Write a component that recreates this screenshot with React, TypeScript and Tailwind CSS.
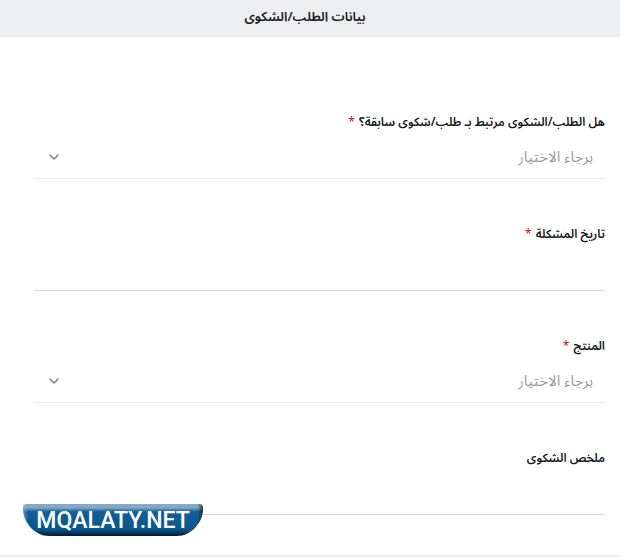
import type { ReactNode } from "react";
import { ChevronDown } from "lucide-react";

type FieldProps = { id: string; label: string; required?: boolean; children: ReactNode };

const controlClass =
  "block h-11 w-full appearance-none rounded-none border-b bg-transparent px-3 pt-0.5 text-[15px] text-[#9a9a9a] outline-none";

function Field({ id, label, required, children }: FieldProps) {
  return (
    <div>
      <label htmlFor={id} className="block h-6 text-xs leading-6 font-semibold text-[#16191c]">
        {label}
        {required && <span className="pr-px font-normal text-[#b02020]"> *</span>}
      </label>
      {children}
    </div>
  );
}

function SelectField({ id, label }: { id: string; label: string }) {
  return (
    <Field id={id} label={label} required>
      <div className="relative">
        <select id={id} className={`${controlClass} border-[#ebebeb]`}>
          <option>برجاء الاختيار</option>
        </select>
        <ChevronDown
          className="pointer-events-none absolute top-3.5 left-3 size-4 text-[#7c7c7c]"
          strokeWidth={2.25}
        />
      </div>
    </Field>
  );
}

function Logo() {
  return (
    <svg
      className="absolute bottom-[21px] left-[23px] h-8 w-45"
      viewBox="0 0 180 32"
      role="img"
      aria-label="MQALATY.NET"
    >
      <defs>
        <linearGradient id="plate" x1="0" y1="0" x2="0" y2="1">
          <stop offset="0" stopColor="#86abc6" />
          <stop offset="0.12" stopColor="#7fa8c6" />
          <stop offset="0.24" stopColor="#145f96" />
          <stop offset="0.8" stopColor="#0b568e" />
          <stop offset="0.92" stopColor="#063254" />
          <stop offset="1" stopColor="#031c31" />
        </linearGradient>
        <linearGradient id="sides" x1="0" y1="0" x2="1" y2="0">
          <stop offset="0" stopColor="#8fb3cd" stopOpacity="0.6" />
          <stop offset="0.03" stopColor="#8fb3cd" stopOpacity="0" />
          <stop offset="0.97" stopColor="#031c31" stopOpacity="0" />
          <stop offset="1" stopColor="#031c31" stopOpacity="0.8" />
        </linearGradient>
      </defs>
      <path d="M4 0H176Q180 0 180 4C180 19 168 32 154 32H26C12 32 0 19 0 4Q0 0 4 0Z" fill="url(#plate)" />
      <path d="M4 0H176Q180 0 180 4C180 19 168 32 154 32H26C12 32 0 19 0 4Q0 0 4 0Z" fill="url(#sides)" />
      <text x="90" y="24" textAnchor="middle" fill="#ffffff" fontSize="23" className="font-['Roboto',sans-serif] font-medium">
        MQALATY.NET
      </text>
    </svg>
  );
}

export default function App() {
  return (
    <div
      dir="rtl"
      className="relative bg-white pr-1 font-['Noto_Sans_Arabic','Noto_Sans','DejaVu_Sans',sans-serif]"
    >
      <main className="border-b-2 border-[#edeeef]">
        <h1 className="h-[37px] bg-[#edeef0] pr-2.5 text-center text-[13px] leading-[34px] font-semibold text-[#16191c]">
          بيانات الطلب/الشكوى
        </h1>
        <form className="space-y-11 pt-[74px] pr-[15px] pb-10 pl-[34px]">
          <SelectField id="related" label="هل الطلب/الشكوى مرتبط بـ طلب/شكوى سابقة؟" />
          <Field id="date" label="تاريخ المشكلة" required>
            <input id="date" type="text" className={`${controlClass} border-[#d9d9d9]`} />
          </Field>
          <SelectField id="product" label="المنتج" />
          <Field id="summary" label="ملخص الشكوى">
            <input id="summary" type="text" className={`${controlClass} border-[#d9d9d9]`} />
          </Field>
        </form>
      </main>
      <Logo />
    </div>
  );
}
